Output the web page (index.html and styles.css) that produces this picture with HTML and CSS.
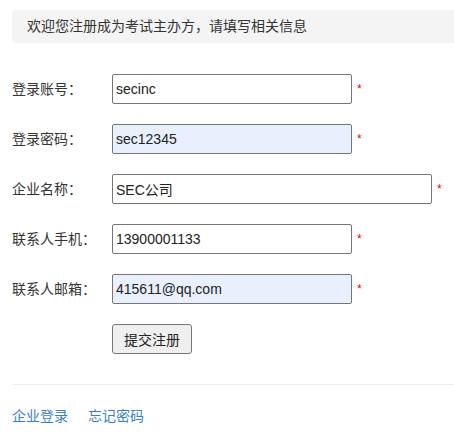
FILE: index.html
```html
<!DOCTYPE html>
<html lang="zh-CN">
<head>
<meta charset="utf-8">
<title>注册</title>
<link rel="stylesheet" href="styles.css">
</head>
<body>
<div class="page">
  <div class="notice">欢迎您注册成为考试主办方，请填写相关信息</div>
  <form class="form">
    <div class="row">
      <label class="label">登录账号：</label>
      <input class="field" type="text" value="secinc">
      <span class="req">*</span>
    </div>
    <div class="row">
      <label class="label">登录密码：</label>
      <input class="field autofill" type="text" value="sec12345">
      <span class="req">*</span>
    </div>
    <div class="row">
      <label class="label">企业名称：</label>
      <input class="field wide" type="text" value="SEC公司">
      <span class="req">*</span>
    </div>
    <div class="row">
      <label class="label">联系人手机：</label>
      <input class="field" type="text" value="13900001133">
      <span class="req">*</span>
    </div>
    <div class="row">
      <label class="label">联系人邮箱：</label>
      <input class="field autofill" type="text" value="415611@qq.com">
      <span class="req">*</span>
    </div>
    <div class="row">
      <span class="label"></span>
      <button class="submit" type="button">提交注册</button>
    </div>
  </form>
  <hr class="divider">
  <div class="links">
    <a href="#">企业登录</a>
    <a href="#">忘记密码</a>
  </div>
</div>
</body>
</html>
```
FILE: styles.css
```css
html, body {
  margin: 0;
  padding: 0;
  overflow: hidden;
  background: #fff;
}
body {
  font-family: "Liberation Sans", "Noto Sans CJK SC", sans-serif;
  font-size: 14px;
  color: #333;
}
.page {
  padding: 10px 0 0 12px;
}
.notice {
  background: #f4f4f4;
  border-radius: 4px 0 0 4px;
  height: 33px;
  line-height: 33px;
  padding-left: 15px;
  margin-right: -10px;
}
.form {
  margin: 31px 0 0 0;
  display: flex;
  flex-direction: column;
  gap: 20px;
}
.row {
  display: flex;
  align-items: center;
  height: 30px;
}
.label {
  width: 100px;
  flex: none;
  line-height: 30px;
}
.field {
  box-sizing: border-box;
  width: 240px;
  height: 30px;
  border: 1px solid #767676;
  border-radius: 2px;
  padding: 0 4px 0 3px;
  font-family: "Liberation Sans", "Noto Sans CJK SC", sans-serif;
  font-size: 14px;
  color: #222;
  background: #fff;
  margin: 0;
}
.field.wide {
  width: 320px;
}
.field.autofill {
  background: #e8f0fe;
}
.req {
  color: #e00;
  font-size: 12px;
  margin-left: 5px;
  line-height: 12px;
  align-self: center;
  position: relative;
  top: 0;
}
.submit {
  box-sizing: border-box;
  width: 80px;
  height: 30px;
  border: 1px solid #767676;
  border-radius: 3px;
  background: #efefef;
  font-family: "Liberation Sans", "Noto Sans CJK SC", sans-serif;
  font-size: 14px;
  color: #222;
  padding: 0;
  margin: 0;
}
.divider {
  border: 0;
  border-top: 1px solid #eee;
  margin: 30px -10px 0 0;
  height: 0;
}
.links {
  margin-top: 21px;
  display: flex;
  gap: 20px;
  line-height: 20px;
}
.links a {
  color: #3a7fc4;
  text-decoration: none;
}
```
